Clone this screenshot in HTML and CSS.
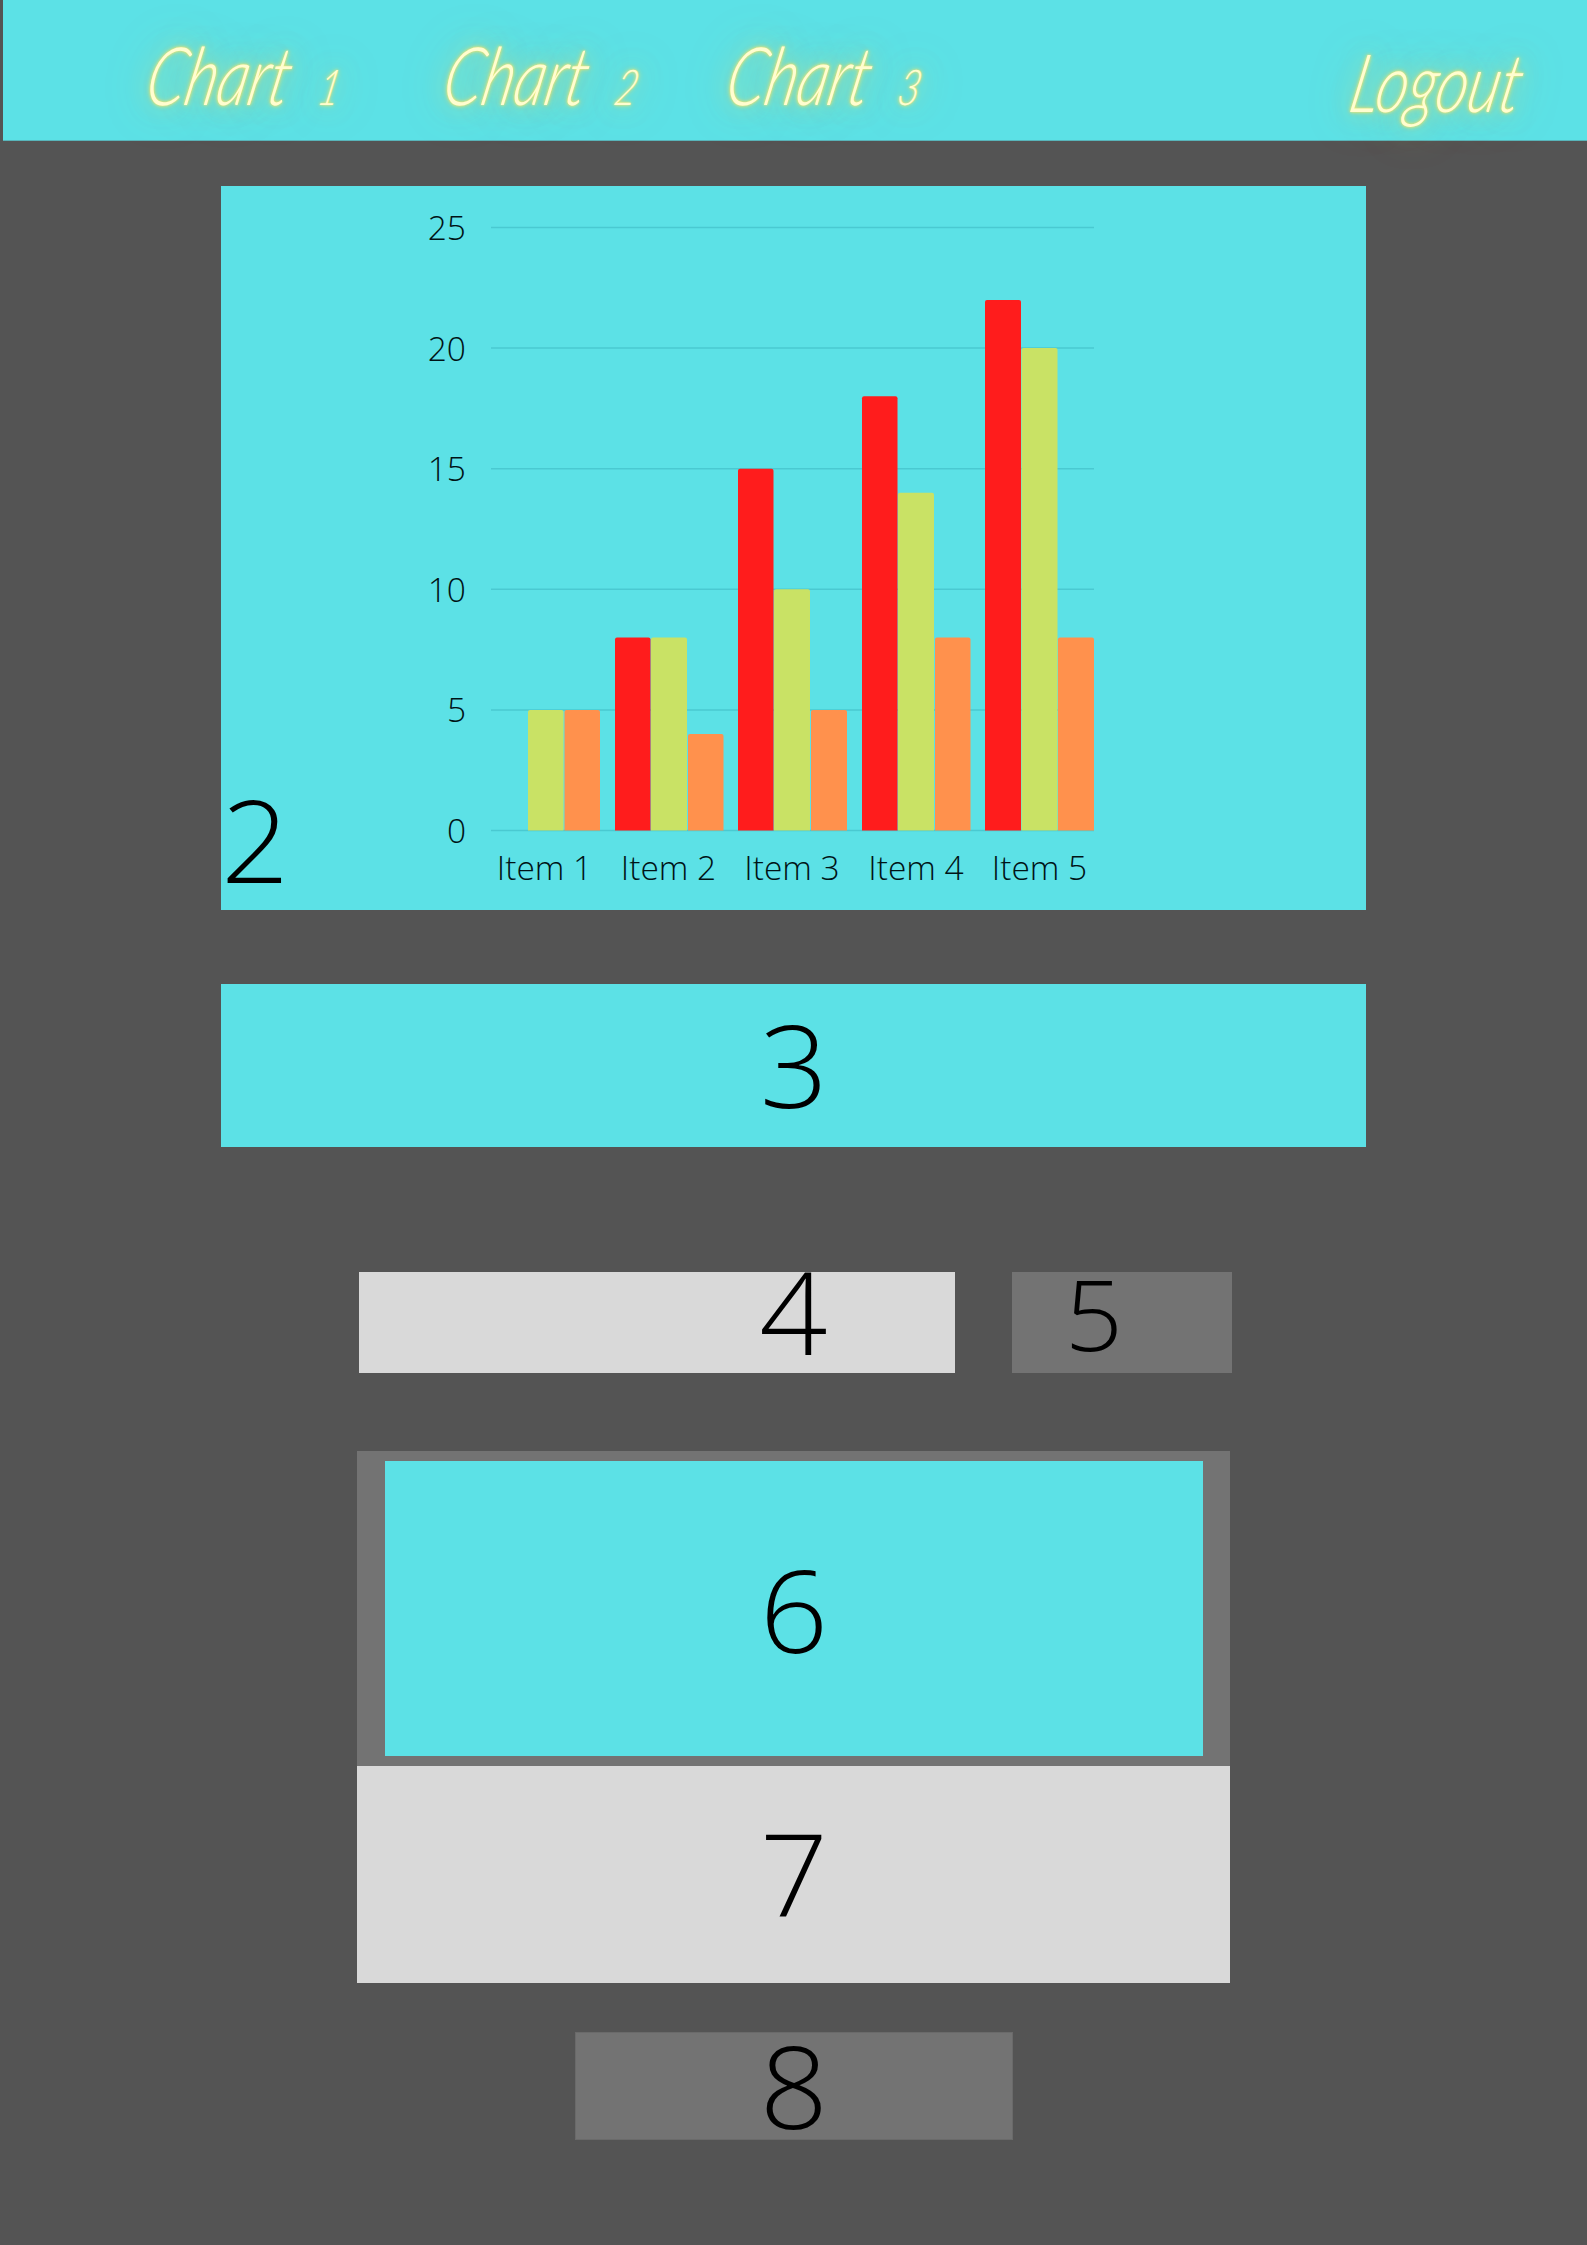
FILE: index.html
```html
<!DOCTYPE html>
<html lang="en">
<head>
<meta charset="utf-8">
<title>Charts</title>
<link rel="stylesheet" href="styles.css">
</head>
<body>
<header class="topbar">
  <nav class="nav">
    <a class="nav-link nav-one">Chart <span class="nav-num">1</span></a>
    <a class="nav-link nav-two">Chart <span class="nav-num">2</span></a>
    <a class="nav-link nav-three">Chart <span class="nav-num">3</span></a>
    <a class="nav-link nav-logout">Logout</a>
  </nav>
</header>
<main class="page">
  <section class="panel-chart">
    <div class="digit digit-two">2</div>
    <svg class="chart" viewBox="400 186 720 724" width="720" height="724" role="img" aria-label="Bar chart">
      <defs><clipPath id="plot"><rect x="480" y="200" width="620" height="630.5"/></clipPath></defs>
      <g class="grid">
        <line x1="491" x2="1094" y1="227.5" y2="227.5"/>
        <line x1="491" x2="1094" y1="348" y2="348"/>
        <line x1="491" x2="1094" y1="468.7" y2="468.7"/>
        <line x1="491" x2="1094" y1="589.3" y2="589.3"/>
        <line x1="491" x2="1094" y1="710" y2="710"/>
        <line x1="491" x2="1094" y1="830.5" y2="830.5"/>
      </g>
      <g clip-path="url(#plot)">
        <g class="bar-green">
          <rect x="528" y="710" width="35.5" height="130" rx="2"/>
          <rect x="651" y="637.5" width="36" height="200" rx="2"/>
          <rect x="774" y="589.3" width="36" height="250" rx="2"/>
          <rect x="898" y="492.8" width="36" height="345" rx="2"/>
          <rect x="1021.5" y="348" width="36" height="490" rx="2"/>
        </g>
        <g class="bar-orange">
          <rect x="564.5" y="710" width="35.5" height="130" rx="2"/>
          <rect x="688" y="734" width="35.5" height="105" rx="2"/>
          <rect x="811" y="710" width="36" height="130" rx="2"/>
          <rect x="935" y="637.5" width="35.5" height="200" rx="2"/>
          <rect x="1058" y="637.5" width="36" height="200" rx="2"/>
        </g>
        <g class="bar-red">
          <rect x="615" y="637.5" width="35.5" height="200" rx="2"/>
          <rect x="738" y="468.7" width="35.5" height="370" rx="2"/>
          <rect x="862" y="396.3" width="35.5" height="440" rx="2"/>
          <rect x="985" y="300" width="36" height="540" rx="2"/>
        </g>
      </g>
      <g class="tick tick-y">
        <text x="466" y="240">25</text>
        <text x="466" y="360.5">20</text>
        <text x="466" y="481">15</text>
        <text x="466" y="601.5">10</text>
        <text x="466" y="722">5</text>
        <text x="466" y="843">0</text>
      </g>
      <g class="tick tick-x">
        <text x="544.500" y="880">Item 1</text>
        <text x="668.500" y="880">Item 2</text>
        <text x="792" y="880">Item 3</text>
        <text x="916" y="880">Item 4</text>
        <text x="1039.500" y="880">Item 5</text>
      </g>
    </svg>
  </section>
  <section class="panel-three"><div class="digit">3</div></section>
  <div class="row-split">
    <div class="cell-four"><div class="digit digit-four">4</div></div>
    <div class="cell-five"><div class="digit digit-five">5</div></div>
  </div>
  <div class="stack">
    <div class="cell-six"><div class="cell-six-inner"><div class="digit">6</div></div></div>
    <div class="cell-seven"><div class="digit">7</div></div>
  </div>
  <div class="cell-eight"><div class="digit">8</div></div>
</main>
</body>
</html>
```
FILE: styles.css
```css
* { box-sizing: border-box; }

html, body { margin: 0; padding: 0; }

body {
  width: 1587px;
  height: 2245px;
  background: #545454;
  overflow: hidden;
  font-family: "Open Sans", "Liberation Sans", sans-serif;
  font-weight: 300;
  color: #000;
}

.topbar {
  height: 141px;
  margin-left: 3px;
  background: #5ce1e6;
  border-bottom: 1px solid #58b5ba;
}

.nav {
  display: flex;
  height: 100%;
  align-items: center;
}

.nav-link {
  display: block;
  font-family: "Lato", "Open Sans", sans-serif;
  font-style: italic;
  font-weight: 300;
  font-size: 62px;
  line-height: 70px;
  white-space: nowrap;
  color: #fffdd0;
  transform: skewX(-12deg) scaleY(1.3);
  text-shadow:
    0 0 2px #ffe96a,
    0 0 5px rgba(255, 222, 89, 0.9),
    0 0 18px rgba(255, 222, 89, 0.55),
    0 0 36px rgba(255, 222, 89, 0.5);
}

.nav-num {
  display: inline-block;
  margin-left: 14px;
  font-size: 38px;
}

.nav-one { margin: 18px 0 0 145px; }
.nav-two { margin: 18px 0 0 102px; }
.nav-three { margin: 18px 0 0 88px; }
.nav-logout { margin: 22px 0 0 auto; padding-right: 64px; }

.page {
  display: flex;
  flex-direction: column;
  align-items: center;
}

.digit {
  font-size: 115px;
  line-height: 120px;
  height: 120px;
  font-weight: 300;
  transform: scaleX(1.04);
  transform-origin: center;
}

.panel-chart {
  display: flex;
  width: 1145px;
  height: 724px;
  margin-top: 45px;
  background: #5ce1e6;
}

.digit-two {
  align-self: flex-end;
  margin-bottom: 11px;
  flex: none;
  width: 179px;
  transform-origin: left center;
}

.chart { display: block; flex: none; }

.grid line { stroke: #4ac9d1; stroke-width: 1.4; }
.bar-red rect { fill: #ff1c1c; }
.bar-green rect { fill: #c9e265; }
.bar-orange rect { fill: #ff914d; }

.tick text {
  font-family: "Open Sans", "Liberation Sans", sans-serif;
  font-weight: 300;
  font-size: 33.5px;
  fill: #001316;
}
.tick-y text { text-anchor: end; }
.tick-x text { text-anchor: middle; }

.panel-three {
  display: flex;
  justify-content: center;
  width: 1145px;
  height: 163px;
  margin-top: 74px;
  padding-top: 20px;
  background: #5ce1e6;
}

.row-split {
  display: flex;
  gap: 57px;
  width: 873px;
  height: 101px;
  margin: 125px 0 0 4px;
}

.cell-four {
  width: 596px;
  padding-left: 404px;
  background: #d9d9d9;
}

.digit-four { margin-top: -21px; }

.cell-five {
  width: 220px;
  padding-left: 56px;
  background: #737373;
}

.digit-five { font-size: 98px; margin-top: -19px; }

.stack {
  display: flex;
  flex-direction: column;
  width: 873px;
  margin-top: 78px;
}

.cell-six {
  height: 315px;
  padding: 10px 27px 10px 28px;
  background: #737373;
}

.cell-six-inner {
  display: flex;
  align-items: center;
  justify-content: center;
  height: 100%;
  background: #5ce1e6;
}

.cell-seven {
  display: flex;
  align-items: center;
  justify-content: center;
  height: 217px;
  padding-bottom: 4px;
  background: #d9d9d9;
}

.cell-eight {
  display: flex;
  align-items: center;
  justify-content: center;
  width: 438px;
  height: 108px;
  margin-top: 49px;
  padding-bottom: 3px;
  background: #737373;
  border: 1px solid #6a6a6a;
}
```
